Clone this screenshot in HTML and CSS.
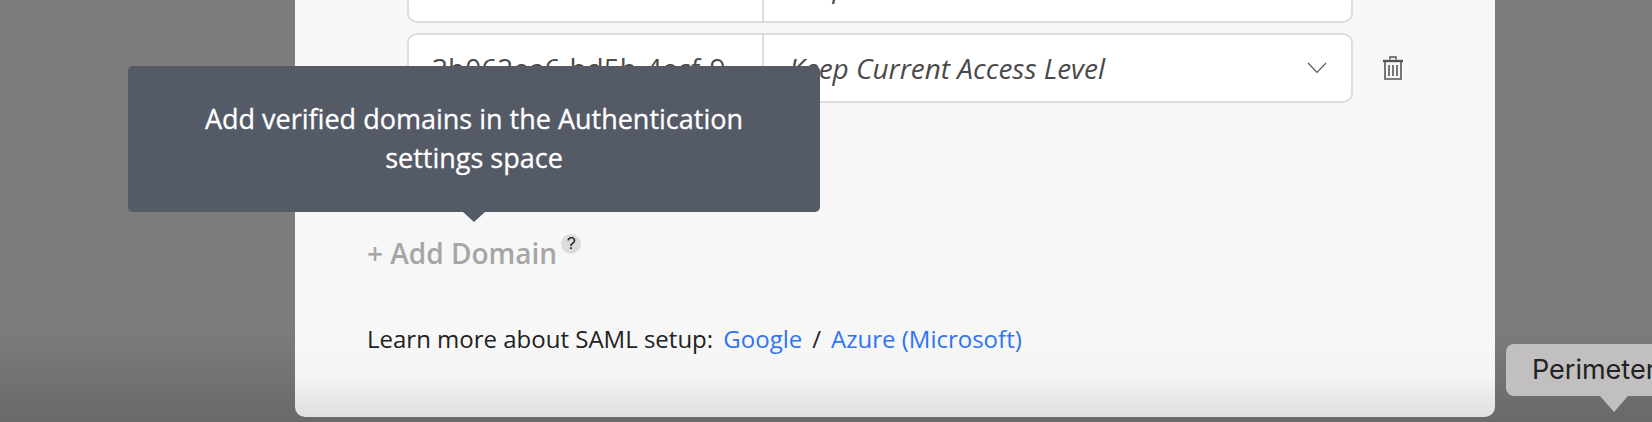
FILE: index.html
```html
<!DOCTYPE html>
<html lang="en">
<head>
  <meta charset="UTF-8">
  <title>SAML setup</title>
  <link rel="stylesheet" href="styles.css">
</head>
<body>
  <div class="modal">
    <div class="domain-row domain-row-first">
      <div class="domain-id"></div>
      <div class="domain-access">
        <span>Keep Current Access Level</span>
        <svg class="chevron" width="20" height="12" viewBox="0 0 20 12"><path d="M1 1l9 9.5L19 1" fill="none" stroke="#555" stroke-width="1.1"/></svg>
      </div>
      <div class="row-action"></div>
    </div>
    <div class="domain-row">
      <div class="domain-id">3b062ea6-bd5b-4ecf-9</div>
      <div class="domain-access">
        <span>Keep Current Access Level</span>
        <svg class="chevron" width="20" height="12" viewBox="0 0 20 12"><path d="M1 1l9 9.5L19 1" fill="none" stroke="#555" stroke-width="1.1"/></svg>
      </div>
      <div class="row-action">
        <svg width="20" height="24" viewBox="0 0 20 24">
          <path d="M7 3.5V1h6v2.5" fill="none" stroke="#555" stroke-width="1.5"/>
          <path d="M0 5h20" fill="none" stroke="#555" stroke-width="2.4"/>
          <path d="M2 6v17h16V6" fill="none" stroke="#555" stroke-width="1.6"/>
          <path d="M6 9v11M10 9v11M14 9v11" fill="none" stroke="#555" stroke-width="1.6"/>
        </svg>
      </div>
    </div>
    <div class="add-domain">+ Add Domain<span class="help">?</span></div>
    <p class="learn-more">Learn more about SAML setup: <a href="#">Google</a><span class="slash">/</span><a href="#">Azure (Microsoft)</a></p>
  </div>

  <div class="tooltip">Add verified domains in the Authentication settings space</div>
  <div class="native-tip">Perimeter</div>
</body>
</html>
```

FILE: styles.css
```css
html, body { margin: 0; height: 100%; }
body { background: linear-gradient(#7c7c7c 330px, #696969); font-family: "Open Sans", sans-serif; height: 422px; overflow: hidden; position: relative; display: flex; align-items: flex-end; padding-bottom: 5px; box-sizing: border-box; }

.modal { box-sizing: border-box; width: 1200px; height: 417px; margin-left: 295px; padding: 0 0 63px 112px; display: flex; flex-direction: column; justify-content: flex-end; background: linear-gradient(#f7f7f7 340px, #f4f4f4 375px, #e0e0e0); border-radius: 0 0 10px 10px; flex-shrink: 0; }

.domain-row { display: flex; flex-shrink: 0; height: 70px; margin-bottom: 10px; }
.domain-row-first { height: 74px; }
.domain-id { box-sizing: border-box; width: 357px; padding: 0 24px 0 23px; display: flex; align-items: center; white-space: nowrap; overflow: hidden; background: #fff; border: 2px solid #ddd; border-radius: 10px 0 0 10px; font-size: 28px; color: #4a4a4a; }
.domain-access { box-sizing: border-box; width: 589px; padding: 0 24px 0 25px; display: flex; align-items: center; justify-content: space-between; background: #fff; border: 2px solid #ddd; border-left: 0; border-radius: 0 10px 10px 0; font-size: 28px; font-style: italic; color: #4a4a4a; }
.row-action { width: 70px; padding-left: 30px; display: flex; align-items: center; }

.add-domain { margin: 123px 0 0 -40px; font-size: 28px; font-weight: 600; color: #a6a6a6; line-height: 34px; display: flex; }
.help { width: 20px; height: 20px; margin: -2px 0 0 4px; border-radius: 50%; background: #dcdcdc; color: #111; font-family: "Liberation Sans", sans-serif; font-size: 16px; font-weight: 400; line-height: 20px; text-align: center; }

.learn-more { margin: 54px 0 0 -40px; font-size: 24px; line-height: 30px; color: #222; white-space: pre-wrap; }
.learn-more a { color: #2f74f2; text-decoration: none; margin-left: 4px; }
.slash { margin: 0 6px 0 10px; }

.tooltip { position: absolute; left: 128px; top: 66px; box-sizing: border-box; width: 692px; height: 146px; padding: 33px 60px 0; background: #545a66; border-radius: 5px; color: #fff; font-size: 27px; -webkit-text-stroke: 0.3px #fff; line-height: 39px; text-align: center; }
.tooltip::after { content: ""; position: absolute; left: 335px; top: 146px; border: 11px solid transparent; border-top: 10px solid #545a66; border-bottom: 0; }

.native-tip { position: absolute; left: 1506px; top: 344px; box-sizing: border-box; width: 220px; height: 52px; padding-left: 26px; background: #c1bfbf; border-radius: 8px; font-family: Inter, sans-serif; font-size: 27px; line-height: 52px; color: #222; }
.native-tip::after { content: ""; position: absolute; left: 94px; top: 52px; border: 14px solid transparent; border-top: 16px solid #c1bfbf; border-bottom: 0; }
```
